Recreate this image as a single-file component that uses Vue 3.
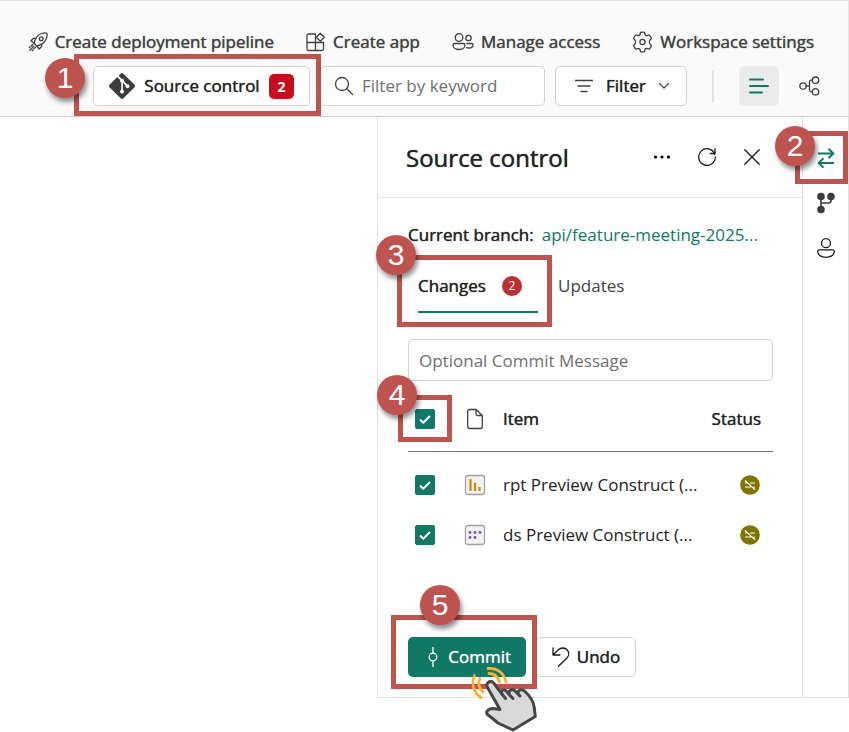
<script setup>
import { ref } from 'vue'

const keyword = ref('')
const message = ref('')
const allSelected = ref(true)
const items = ref([
  { name: 'rpt Preview Construct (...', type: 'report', selected: true },
  { name: 'ds Preview Construct (...', type: 'dataset', selected: true }
])
</script>

<template>
  <div class="page">
    <header class="toolbar">
      <nav class="actions" aria-label="Workspace actions">
        <button class="action" type="button">
          <svg width="20" height="20" viewBox="0 0 20 20" class="line">
            <path d="M6 11.2C7 7 9.500 3 13.500 1.500 15.500.8 18 .8 18.800 1.300 19.300 2.500 19 5 18.300 6.800 16.800 10.500 13 13 8.800 14z" />
            <path d="M8 6.300H5.500L3 8.800 6 11.200M8.800 14l2.400 3L13.700 14.500V12M4.800 12.500l-1.500 1.500M5.800 14.200l-4 4M7.500 15.200l-1.700 1.700M2.200 14.800l-.8.8M5 18l-.8.8" />
            <circle cx="13.300" cy="6.700" r="1.900" />
          </svg>
          Create deployment pipeline
        </button>
        <button class="action" type="button">
          <svg width="20" height="20" viewBox="0 0 20 20" class="line">
            <path d="M9.500 2H2.500Q1 2 1 3.500V17Q1 18.500 2.500 18.500H16Q17.500 18.500 17.500 17V10.500H1M9.500 2V18.500" />
            <path d="M14.300 1.200L18.300 5.200 14.300 9.200 10.300 5.200z" />
          </svg>
          Create app
        </button>
        <button class="action" type="button">
          <svg width="22" height="20" viewBox="0 0 22 20" class="line">
            <circle cx="7" cy="5.500" r="3.800" />
            <circle cx="16.500" cy="6" r="2.700" />
            <path d="M2.500 11.500H11.500Q13 11.500 13 13C13 16 10 17.500 7 17.500S1 16 1 13Q1 11.500 2.500 11.500zM14.800 11.500H19.500Q21 11.500 21 13C21 15 19 16 17 16 16 16 15.200 15.900 14.500 15.600" />
          </svg>
          Manage access
        </button>
        <button class="action" type="button">
          <svg width="21" height="22" viewBox="0 0 21 22" class="line">
            <path d="M8.500 1.300Q10.500.8 12.500 1.300L13.100 4Q13.800 4.700 14.800 4.700L17.200 3.900Q18.800 5.400 19.500 7.500L17.700 9.400Q17 11 17.700 12.600L19.500 14.500Q18.800 16.600 17.200 18.100L14.800 17.300Q13.800 17.300 13.100 18L12.500 20.700Q10.500 21.200 8.500 20.700L7.900 18Q7.200 17.300 6.200 17.300L3.800 18.100Q2.200 16.600 1.500 14.500L3.300 12.600Q4 11 3.300 9.400L1.500 7.500Q2.200 5.400 3.800 3.900L6.200 4.700Q7.200 4.700 7.900 4z" />
            <circle cx="10.500" cy="11" r="2.600" />
          </svg>
          Workspace settings
        </button>
      </nav>

      <div class="tools">
        <div class="host">
          <button class="btn source" type="button">
            <svg width="26" height="26" viewBox="0 0 24 24" fill="#3d3d3d">
              <path d="M23.546 10.930L13.067.452c-.604-.603-1.582-.603-2.188 0L8.708 2.627l2.760 2.760c.645-.215 1.379-.070 1.889.441.516.515.658 1.258.438 1.900l2.658 2.660c.645-.223 1.387-.078 1.900.435.721.720.721 1.884 0 2.604-.719.719-1.881.719-2.600 0-.539-.541-.674-1.337-.404-1.996L12.860 8.955v6.525c.176.086.342.203.488.348.713.721.713 1.883 0 2.600-.719.721-1.889.721-2.609 0-.719-.719-.719-1.879 0-2.598.182-.180.387-.316.605-.406V8.835c-.217-.091-.424-.222-.600-.401-.545-.545-.676-1.342-.396-2.009L7.636 3.700.450 10.881c-.600.605-.600 1.584 0 2.189l10.480 10.477c.604.604 1.582.604 2.186 0l10.430-10.430c.605-.603.605-1.582 0-2.187" />
            </svg>
            <span>Source control</span>
            <span class="count">2</span>
          </button>
          <span class="mark mark-1"><b class="step">1</b></span>
        </div>
        <label class="search">
          <svg width="20" height="20" viewBox="0 0 20 20" class="line">
            <circle cx="8" cy="8" r="6.500" />
            <path d="M12.800 12.800L18.500 18.500" />
          </svg>
          <input v-model="keyword" type="text" placeholder="Filter by keyword" aria-label="Filter by keyword" />
        </label>
        <button class="btn filter" type="button">
          <svg width="18" height="14" viewBox="0 0 18 14" class="line">
            <path d="M0 1.500H18M3 7H15M6 12.500H12" />
          </svg>
          <span>Filter</span>
          <svg width="10" height="6" viewBox="0 0 10 6" class="line">
            <path d="M.5.5L5 5 9.500.5" />
          </svg>
        </button>
        <span class="divider"></span>
        <button class="view active" type="button" aria-label="List view">
          <svg width="20" height="16" viewBox="0 0 20 16" fill="none" stroke="#117865" stroke-width="2" stroke-linecap="round">
            <path d="M1 1.500H14M1 8H19M1 14.500H13" />
          </svg>
        </button>
        <button class="view" type="button" aria-label="Lineage view">
          <svg width="21" height="20" viewBox="0 0 21 20" class="line">
            <circle cx="4" cy="10" r="3.200" />
            <circle cx="16.500" cy="4.200" r="3.200" />
            <circle cx="16.500" cy="15.800" r="3.200" />
            <path d="M7.200 10H10.500M13.300 4.200H12Q10.500 4.200 10.500 6V14Q10.500 15.800 12 15.800H13.300" />
          </svg>
        </button>
      </div>
    </header>

    <main class="main">
      <section class="panel">
        <div class="panel-head">
          <h1>Source control</h1>
          <button class="icon-btn" type="button" aria-label="More options">
            <svg width="18" height="4" viewBox="0 0 18 4">
              <circle cx="2.500" cy="2" r="1.600" /><circle cx="9" cy="2" r="1.600" /><circle cx="15.500" cy="2" r="1.600" />
            </svg>
          </button>
          <button class="icon-btn" type="button" aria-label="Refresh">
            <svg width="20" height="20" viewBox="0 0 20 20" class="line dark">
              <path d="M17.900 7.500A8.300 8.300 0 1 0 18.300 10M18 1.800V6.500H13.300" />
            </svg>
          </button>
          <button class="icon-btn" type="button" aria-label="Close">
            <svg width="16" height="16" viewBox="0 0 16 16" class="line dark">
              <path d="M.8.8L15.200 15.200M15.200.8L.8 15.200" />
            </svg>
          </button>
        </div>

        <div class="panel-body">
          <p class="branch"><strong>Current branch:</strong><a href="#branch">api/feature-meeting-2025...</a></p>

          <div class="tabs" role="tablist">
            <div class="host">
              <button class="tab selected" type="button" role="tab" aria-selected="true">
                Changes <span class="dot">2</span>
              </button>
              <span class="mark mark-3"><b class="step">3</b></span>
            </div>
            <button class="tab" type="button" role="tab" aria-selected="false">Updates</button>
          </div>

          <input v-model="message" class="message" type="text" placeholder="Optional Commit Message" aria-label="Optional Commit Message" />

          <table>
            <thead>
              <tr>
                <th class="c-check">
                  <span class="check host">
                    <input v-model="allSelected" type="checkbox" aria-label="Select all" />
                    <svg width="12" height="9" viewBox="0 0 12 9"><path d="M1 4.500L4.300 7.700 11 1" /></svg>
                    <span class="mark mark-4"><b class="step">4</b></span>
                  </span>
                </th>
                <th class="c-type">
                  <svg width="22" height="22" viewBox="0 0 22 22" class="line">
                    <path d="M5.500 1.500H12L18.300 7.500V18.500Q18.300 20.500 16.500 20.500H5.500Q3.700 20.500 3.700 18.500V3.500Q3.700 1.500 5.500 1.500zM12 1.500V6Q12 7.500 13.500 7.500H18.300" />
                  </svg>
                </th>
                <th>Item</th>
                <th class="c-status">Status</th>
              </tr>
            </thead>
            <tbody>
              <tr v-for="item in items" :key="item.name">
                <td class="c-check">
                  <span class="check">
                    <input v-model="item.selected" type="checkbox" :aria-label="item.name" />
                    <svg width="12" height="9" viewBox="0 0 12 9"><path d="M1 4.500L4.300 7.700 11 1" /></svg>
                  </span>
                </td>
                <td class="c-type">
                  <svg width="22" height="22" viewBox="0 0 22 22">
                    <rect x="1.500" y="1.500" width="19" height="19" rx="2.500" fill="#f3f2f1" stroke="#a3a19f" stroke-width="1.300" />
                    <path v-if="item.type === 'report'" d="M6.500 5V17M11 9V17M15.500 13V17" fill="none" stroke="#c58a0b" stroke-width="2.200" />
                    <g v-else fill="#7a4fc4">
                      <circle cx="6" cy="8.500" r="1.400" /><circle cx="11" cy="8.500" r="1.400" /><circle cx="16" cy="8.500" r="1.400" />
                      <circle cx="6" cy="13.500" r="1.400" /><circle cx="11" cy="13.500" r="1.400" />
                    </g>
                  </svg>
                </td>
                <td>{{ item.name }}</td>
                <td class="c-status">
                  <svg width="20" height="20" viewBox="0 0 20 20" role="img" aria-label="Modified">
                    <circle cx="10" cy="10" r="9.800" fill="#7f7400" />
                    <path d="M5 5.500L15 14.800M10 8H15M5 8H7M5 12H11M13.800 12H15" fill="none" stroke="#fff" stroke-width="1.200" />
                  </svg>
                </td>
              </tr>
            </tbody>
          </table>

          <div class="footer">
            <div class="host">
              <button class="btn commit" type="button">
                <svg width="10" height="20" viewBox="0 0 10 20" fill="none" stroke="#fff" stroke-width="1.300">
                  <circle cx="5" cy="10" r="3.800" />
                  <path d="M5 0V6.200M5 13.800V20" />
                </svg>
                Commit
              </button>
              <span class="mark mark-5"><b class="step">5</b></span>
              <svg class="hand" width="80" height="72" viewBox="0 0 80 72">
                <path d="M22.500 27.500C20 23 26 19 29 23.500L37 34C34 30 40 28.500 42 32L45 35.500C42 31 47 28 50 31L54 35C51 31 56 28 59.500 31C65 36 69 43 69.300 48L70.300 56.500 48 70 33 63C29 59.500 25 56.500 22.500 54.500 20 51.500 24 48.500 28 48.500L35 49.500z" fill="#d9d9d9" stroke="#474747" stroke-width="3" stroke-linejoin="round" />
                <path d="M37 34L40.500 38.500M45 35.500L48 38.500M54 35L55 36" fill="none" stroke="#474747" stroke-width="3" stroke-linecap="round" />
                <path d="M16 37.500C8 32 6 23 9.500 15.500M18 32C13.500 28 13 23 15 18.500M24 13.500C29.500 13.500 33 17 34.500 22M23 8.500C32 7.500 39 13 41 22" fill="none" stroke="#fbb034" stroke-width="2.800" stroke-linecap="round" />
              </svg>
            </div>
            <button class="btn undo" type="button">
              <svg width="18" height="20" viewBox="0 0 18 20" class="line dark">
                <path d="M1 1V8H8M1.300 7.700L6 3C9 .3 13 .3 15.200 3 17.500 5.700 17 9 15 11L6.500 19.300" />
              </svg>
              Undo
            </button>
          </div>
        </div>
      </section>

      <aside class="rail">
        <div class="host">
          <button class="rail-btn" type="button" aria-label="Sync changes">
            <svg width="18" height="20" viewBox="0 0 18 20" fill="none" stroke="#117865" stroke-width="2">
              <path d="M1 5.500H16M11.500.8L16.300 5.500 11.500 10.200M17 15H2M6.500 10.300L1.700 15 6.500 19.700" />
            </svg>
          </button>
          <span class="mark mark-2"><b class="step">2</b></span>
        </div>
        <button class="rail-btn" type="button" aria-label="Branches">
          <svg width="18" height="22" viewBox="0 0 18 22" fill="#3d3d3d">
            <circle cx="4" cy="4.500" r="3.800" /><circle cx="14" cy="4.500" r="3.800" /><circle cx="4" cy="17.500" r="3.800" />
            <path d="M4 4V17M14 5V8.500Q14 11 11.500 11H4" fill="none" stroke="#3d3d3d" stroke-width="1.600" />
          </svg>
        </button>
        <button class="rail-btn" type="button" aria-label="Account">
          <svg width="18" height="20" viewBox="0 0 18 20" class="line dark">
            <circle cx="9" cy="5.200" r="4.500" />
            <path d="M2.300 11.800H15.700Q17.300 11.800 17.300 13.500C17.300 17.500 13 19.300 9 19.300S.7 17.500.7 13.500Q.7 11.800 2.300 11.800z" />
          </svg>
        </button>
      </aside>
    </main>
  </div>
</template>

<style>
body {
  background: #fff;
}
</style>

<style scoped>
.page {
  min-height: 100vh;
  font-family: "Open Sans", "Noto Sans", sans-serif;
  font-size: 17px;
  line-height: 24px;
  color: #242424;
}

.page * {
  box-sizing: border-box;
}

button,
input {
  font: inherit;
  color: inherit;
}

button {
  display: flex;
  align-items: center;
  padding: 0;
  border: 0;
  background: none;
  white-space: nowrap;
}

svg {
  display: block;
  flex: none;
}

.line {
  fill: none;
  stroke: #424242;
  stroke-width: 1.3;
  stroke-linecap: round;
  stroke-linejoin: round;
}

.dark {
  stroke: #1a1a1a;
}

.host {
  position: relative;
}

/* Medium weight with a slightly firmer stroke */
.action,
.btn,
.selected,
h1,
strong,
th {
  font-weight: 500;
  text-shadow: 0 0 1px currentColor;
}

.toolbar {
  display: flex;
  flex-direction: column;
  gap: 12px;
  padding: 29px 0 10px;
  background: #fafafa;
  border-top: 1px solid #e8e8e8;
  border-right: 1px solid #e4e4e4;
  border-bottom: 1px solid #d1d1d1;
}

.actions {
  display: flex;
  justify-content: flex-end;
  gap: 32px;
  padding-right: 34px;
}

.action {
  gap: 7px;
  color: #424242;
}

.tools {
  display: flex;
  justify-content: flex-end;
  align-items: center;
  gap: 10px;
  padding-right: 19px;
}

.btn {
  height: 40px;
  background: #fff;
  border: 1px solid #d1d1d1;
  border-radius: 5px;
}

.source {
  width: 217px;
  justify-content: space-between;
  padding: 0 15px;
}

.count {
  width: 25px;
  border-radius: 5px;
  background: #c50f1f;
  color: #fff;
  font-size: 14px;
  font-weight: 700;
  line-height: 25px;
  text-align: center;
  text-shadow: none;
}

.search {
  flex: 0 1 225px;
  min-width: 0;
  display: flex;
  align-items: center;
  gap: 8px;
  height: 40px;
  padding: 0 13px;
  background: #fff;
  border: 1px solid #d1d1d1;
  border-radius: 5px;
}

.search input {
  flex: 1;
  width: 100%;
  min-width: 0;
  padding: 0;
  border: 0;
  outline: 0;
  background: none;
}

input::placeholder {
  color: #707070;
  opacity: 1;
}

.filter {
  width: 132px;
  justify-content: space-between;
  padding: 0 17px 0 19px;
}

.divider {
  width: 2px;
  height: 32px;
  margin: 0 15px;
  background: #e0e0e0;
}

.view {
  justify-content: center;
  width: 40px;
  height: 40px;
  border-radius: 5px;
}

.active {
  background: #ebebeb;
}

.main {
  display: flex;
  justify-content: flex-end;
}

.panel {
  width: 426px;
  border: 1px solid #e0e0e0;
  border-top: 0;
}

.panel-head {
  display: flex;
  align-items: center;
  height: 81px;
  padding: 0 28px 0 28px;
  border-bottom: 1px solid #e6e6e6;
}

h1 {
  flex: 1;
  margin: 0;
  padding-top: 2px;
  font-size: 24px;
  line-height: 32px;
}

.icon-btn {
  justify-content: center;
  width: 45px;
  height: 40px;
}

.panel-body {
  padding: 25px 29px 20px 30px;
}

.branch {
  display: flex;
  gap: 8px;
  margin: 0;
  white-space: nowrap;
}

.branch a {
  color: #117865;
  text-decoration: none;
}

.tabs {
  display: flex;
  gap: 20px;
  padding: 12px 10px 26px;
}

.tab {
  height: 54px;
  color: #424242;
}

.selected {
  width: 120px;
  gap: 16px;
  border-bottom: 2px solid #117865;
  border-top: 2px solid transparent;
  color: #242424;
}

.dot {
  width: 20px;
  border-radius: 50%;
  background: #bc2f32;
  color: #fff;
  font-size: 12px;
  font-weight: 400;
  line-height: 20px;
  text-shadow: none;
}

.message {
  display: block;
  width: 100%;
  height: 42px;
  padding: 0 10px;
  border: 1px solid #d1d1d1;
  border-radius: 5px;
  outline: 0;
}

table {
  width: 100%;
  margin-top: 6px;
  border-collapse: separate;
  border-spacing: 0;
  table-layout: fixed;
}

th,
td {
  height: 50px;
  padding: 0;
  text-align: left;
  white-space: nowrap;
}

th {
  height: 65px;
  border-bottom: 1px solid #757575;
}

tbody::before {
  content: "";
  display: table-row;
  height: 8px;
}

.c-check {
  width: 56px;
  padding-left: 7px;
}

.c-type {
  width: 39px;
}

.c-status {
  width: 69px;
}

th.c-status {
  padding-right: 12px;
  text-align: right;
}

td.c-status {
  padding-left: 36px;
}

.check {
  display: grid;
  place-items: center;
  width: 20px;
  height: 20px;
}

.check > input,
.check > svg {
  grid-area: 1 / 1;
}

.check input {
  appearance: none;
  width: 20px;
  height: 20px;
  margin: 0;
  border: 1px solid #616161;
  border-radius: 2px;
  background: #fff;
}

.check input:checked {
  border-color: #117865;
  background: #117865;
}

.check svg {
  z-index: 1;
  pointer-events: none;
  fill: none;
  stroke: #fff;
  stroke-width: 2;
}

.footer {
  display: flex;
  gap: 10px;
  margin-top: 77px;
}

.commit {
  justify-content: flex-end;
  gap: 10px;
  width: 118px;
  padding-right: 15px;
  border: 0;
  background: #117865;
  color: #fff;
}

.undo {
  justify-content: center;
  gap: 7px;
  width: 100px;
}

.rail {
  width: 46px;
  padding: 18px 0;
  border-right: 1px solid #e0e0e0;
  border-bottom: 1px solid #e0e0e0;
}

.rail-btn {
  justify-content: center;
  width: 100%;
  height: 45px;
}

/* Numbered callouts laid over the controls they describe */
.mark {
  position: absolute;
  z-index: 2;
  border: 5px solid #be5450;
  pointer-events: none;
}

.step {
  position: absolute;
  top: -25px;
  left: -34px;
  width: 40px;
  height: 40px;
  border-radius: 50%;
  background: #be5450;
  box-shadow: 2px 4px 5px rgba(0, 0, 0, 0.45);
  color: #fff;
  font: 400 30px/40px "Liberation Sans", sans-serif;
  text-align: center;
  text-shadow: none;
}

.mark-1 {
  inset: -12px -11px -10px -19px;
}

.mark-1 .step {
  top: -1px;
}

.mark-2 {
  inset: -4px 0 -4px -8px;
}

.mark-2 .step {
  top: -10px;
  left: -25px;
}

.mark-3 {
  inset: -4px -14px -14px -21px;
}

.mark-3 .step,
.mark-4 .step {
  left: -26px;
}

.mark-4 {
  inset: -14px -17px -13px -17px;
}

.mark-5 {
  inset: -22px -11px -12px -17px;
}

.mark-5 .step {
  top: -35px;
  left: 24px;
}

.hand {
  position: absolute;
  z-index: 3;
  top: 23px;
  left: 57px;
  pointer-events: none;
}
</style>
